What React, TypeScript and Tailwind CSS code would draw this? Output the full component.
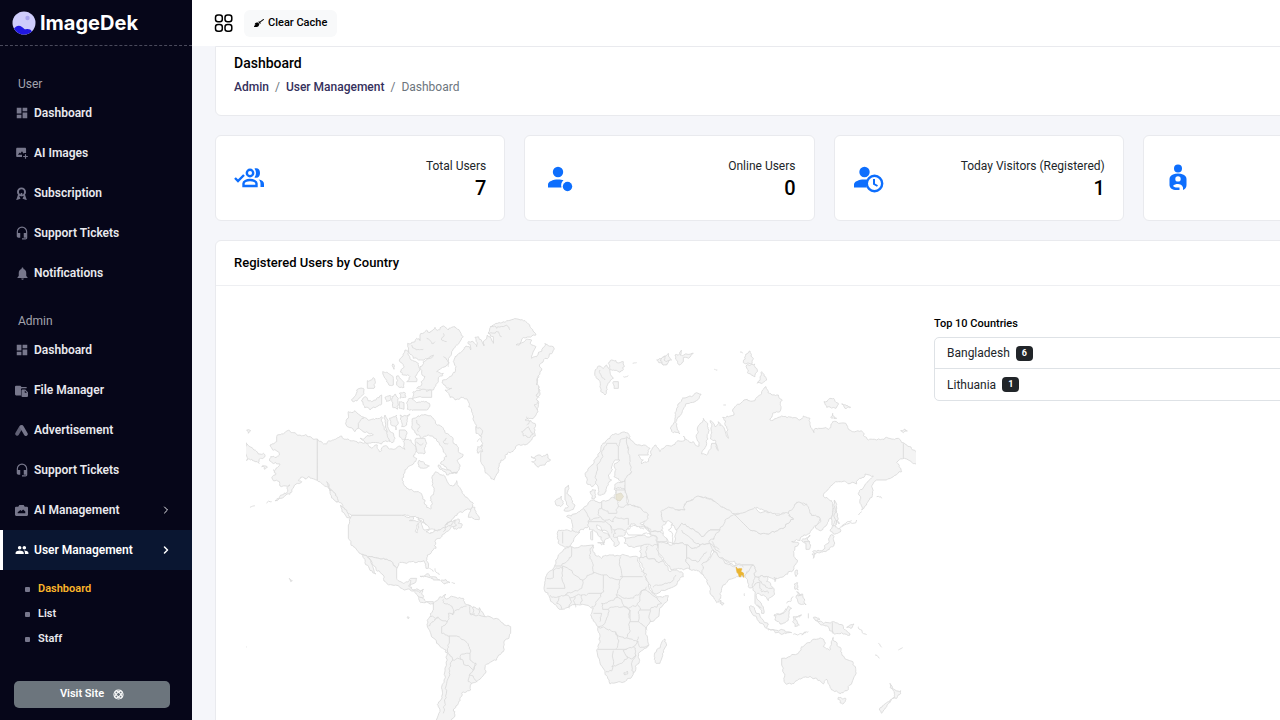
import type { ReactNode } from 'react';
import { FaBroom } from 'react-icons/fa';
import { MdDashboard, MdPeople, MdNotifications, MdHeadsetMic } from 'react-icons/md';
import { BiSolidImageAdd } from 'react-icons/bi';
import { ChevronRight } from 'lucide-react';

type NavItem = { label: string; icon: ReactNode; expandable?: boolean; active?: boolean };

const AwardIcon = () => (
  <svg viewBox="0 0 24 24" className="size-[13px]" fill="none" stroke="currentColor" strokeWidth="3.600">
    <circle cx="12" cy="9" r="6.500" />
    <path d="M7.500 14 5 21.500l4.500-1.500M16.500 14l2.500 7.500-4.500-1.500" />
    <path d="M12 11v6" strokeWidth="3" />
  </svg>
);

const FilesIcon = () => (
  <svg viewBox="0 0 24 24" className="size-[13px]" fill="currentColor">
    <path d="M2 3h8l2 2.500h9.500V8H13a2 2 0 0 0-2 2v11H2a2 2 0 0 1-2-2V5a2 2 0 0 1 2-2Z" />
    <path d="M14 10h5l5 5v7a2 2 0 0 1-2 2h-8a2 2 0 0 1-2-2V12a2 2 0 0 1 2-2Zm4 2v4h4Z" fillRule="evenodd" />
  </svg>
);

const AdsIcon = () => (
  <svg viewBox="0 0 24 24" className="size-[13px]" stroke="currentColor" strokeWidth="7" strokeLinecap="round">
    <path d="M11 6 4 18" opacity=".8" />
    <path d="m12.500 5.500 7.500 13" />
  </svg>
);

const AiIcon = () => (
  <svg viewBox="0 0 24 24" className="size-[13px]" fill="currentColor">
    <path
      fillRule="evenodd"
      d="M8 2h8l2 3h4a2 2 0 0 1 2 2v13a2 2 0 0 1-2 2H2a2 2 0 0 1-2-2V7a2 2 0 0 1 2-2h4ZM5 17h14v-3l-4-4-3 3-2-2-5 4Z"
    />
  </svg>
);

const userNav: NavItem[] = [
  { label: 'Dashboard', icon: <MdDashboard size={14} /> },
  { label: 'AI Images', icon: <BiSolidImageAdd size={14} /> },
  { label: 'Subscription', icon: <AwardIcon /> },
  { label: 'Support Tickets', icon: <MdHeadsetMic size={14} /> },
  { label: 'Notifications', icon: <MdNotifications size={15} /> },
];

const adminNav: NavItem[] = [
  { label: 'Dashboard', icon: <MdDashboard size={14} /> },
  { label: 'File Manager', icon: <FilesIcon /> },
  { label: 'Advertisement', icon: <AdsIcon /> },
  { label: 'Support Tickets', icon: <MdHeadsetMic size={14} /> },
  { label: 'AI Management', icon: <AiIcon />, expandable: true },
  { label: 'User Management', icon: <MdPeople size={14} />, expandable: true, active: true },
];

function NavGroup({ title, items }: { title: string; items: NavItem[] }) {
  return (
    <section>
      <h2 className="h-5 pl-[18px] text-xs leading-[22px] text-[#a3a3ad]">{title}</h2>
      <ul>
        {items.map((item) => (
          <li key={item.label}>
            <a
              href="#"
              className={
                item.active
                  ? 'flex h-10 items-center border-l-[3px] border-white bg-[#0a1631] pr-5 pl-3 text-white'
                  : 'flex h-10 items-center pr-5 pl-[15px] text-[#e9e9ee]'
              }
            >
              <span className={item.active ? 'w-[19px] text-white' : 'w-[19px] text-[#77778c]'}>{item.icon}</span>
              <span className="flex-1 text-xs font-semibold">{item.label}</span>
              {item.expandable && <ChevronRight className="size-3" strokeWidth={item.active ? 3 : 2} />}
            </a>
          </li>
        ))}
      </ul>
    </section>
  );
}

function Sidebar() {
  return (
    <aside className="flex w-48 shrink-0 flex-col bg-[#060619]">
      <div className="flex h-[46px] shrink-0 items-center gap-1 border-b border-dashed border-[#4a4a5c] pl-3">
        <svg viewBox="0 0 24 24" className="size-6">
          <circle cx="12" cy="12" r="11.500" fill="#cfcdfb" />
          <circle cx="15.500" cy="7" r="2.200" fill="#a9a5ee" />
          <path d="M2 17.500c2-2.500 5-4 8-1.500 1.500 1.300 2.500 2.500 4 2.300 2.500-.5 4.500 0 6 2.200a11.500 11.500 0 0 1-18-3Z" fill="#2118e0" />
        </svg>
        <span className="font-[Inter] text-xl font-bold text-white">ImageDek</span>
      </div>
      <nav className="flex flex-1 flex-col gap-[17px] pt-[27px]">
        <NavGroup title="User" items={userNav} />
        <div>
          <NavGroup title="Admin" items={adminNav} />
          <ul className="pt-[7px] pl-[25px] text-[11px] font-semibold text-[#e9e9ee]">
            {['Dashboard', 'List', 'Staff'].map((label, i) => (
              <li key={label} className="flex h-[25px] items-center gap-2">
                <span className="size-[5px] rounded-[1px] bg-[#77778c]" />
                <a href="#" className={i === 0 ? 'text-[#fdb52a]' : ''}>{label}</a>
              </li>
            ))}
          </ul>
        </div>
      </nav>
      <div className="pr-[22px] pb-3 pl-[14px]">
        <button className="flex h-[27px] w-full items-center justify-center gap-[9px] rounded-[5px] bg-[#6c757d] text-[11px] font-semibold text-white">
          Visit Site
          <svg viewBox="0 0 24 24" className="size-[11px]" fill="none" stroke="currentColor" strokeWidth="2.200">
            <circle cx="12" cy="12" r="10" />
            <ellipse cx="12" cy="12" rx="10" ry="4" transform="rotate(45 12 12)" />
            <ellipse cx="12" cy="12" rx="10" ry="4" transform="rotate(-45 12 12)" />
          </svg>
        </button>
      </div>
    </aside>
  );
}

/* stat card icons, 32 unit box */

const GroupCheckIcon = () => (
  <svg viewBox="0 0 32 32" className="size-8" fill="none" stroke="#0d6efd" strokeWidth="2.400">
    <path d="m1 16 3 3 6-6" />
    <circle cx="16" cy="11" r="3.200" />
    <path d="M9.500 24v-2.500c0-2 3-3.500 6.500-3.500s6.500 1.500 6.500 3.500V24Z" />
    <path d="M20.500 6.500c3.500-1 5.500 1 5.500 4.500s-2 5.500-5.500 4.500c2-3 2-6 0-9ZM24.500 17.500c3.500.5 5.500 2 5.500 4.500v3h-3.500v-3c0-2-.5-3.500-2-4.500Z" fill="#0d6efd" stroke="none" />
  </svg>
);

const OnlineIcon = () => (
  <svg viewBox="0 0 32 32" className="size-8" fill="#0d6efd">
    <circle cx="15" cy="10" r="5.200" />
    <path d="M5 25.500v-3c0-3 5-5 10-5 2.500 0 4 .3 5.500.8a7 7 0 0 0-2 7.200Z" />
    <circle cx="24.500" cy="24.500" r="4.700" />
  </svg>
);

const VisitorClockIcon = () => (
  <svg viewBox="0 0 32 32" className="size-8" fill="#0d6efd">
    <circle cx="11.500" cy="10" r="5.200" />
    <path d="M1 25.500v-3c0-3 5-5 10-5 1.500 0 2.700.1 4 .4a9 9 0 0 0-1.500 7.600Z" />
    <circle cx="21.500" cy="21.500" r="7.700" fill="none" stroke="#0d6efd" strokeWidth="2.400" />
    <path d="M21 17v5l3.500 2" fill="none" stroke="#0d6efd" strokeWidth="2" />
  </svg>
);

const VisitorIcon = () => (
  <svg viewBox="0 0 32 32" className="size-8" fill="#0d6efd">
    <circle cx="16" cy="6.500" r="4" />
    <path
      fillRule="evenodd"
      d="M11 12.500c3-1.300 7-1.300 10 0 2 .8 3.500 2.500 3.500 4.500v6c0 2.500-1.500 4.500-3.500 5v-2.500h-3.500V28h-3c-4 0-7-2-7-5v-6c0-2 1.500-3.700 3.500-4.500Zm5 1.700a2.700 2.700 0 1 0 0 5.400 2.700 2.700 0 0 0 0-5.400Zm-5 9.800c2 2 4 1.500 5.500 1.500H21c-1-2.700-3-3.500-5-3.500s-4 .5-5 2Z"
    />
  </svg>
);

const stats = [
  { id: 'total', label: 'Total Users', value: '7', icon: <GroupCheckIcon /> },
  { id: 'online', label: 'Online Users', value: '0', icon: <OnlineIcon /> },
  { id: 'registered', label: 'Today Visitors (Registered)', value: '1', icon: <VisitorClockIcon /> },
  { id: 'guest', icon: <VisitorIcon /> },
];

/* world map: each sheet has its own origin, three units to a pixel */

type Sheet = { x: number; y: number; land?: string[]; borders?: string[]; water?: string[] };

const sheets: Sheet[] = [
  {
    // Alaska, Canada and the arctic islands
    x: 230,
    y: 310,
    land: [
      '140,380 160,372 178,361 195,368 210,375 235,380 262,387 262,511 245,505 235,500 225,507 212,502 205,512 215,515 198,522 185,540 165,557 150,565 135,572 155,555 172,545 180,525 150,528 148,515 130,512 127,500 138,490 130,480 150,462 128,460 118,450 122,440 145,438 148,428 128,420 120,405 140,395',
      '262,387 290,402 310,390 335,378 350,388 370,392 400,400 425,415 442,405 448,425 470,408 490,418 510,408 525,418 520,395 535,388 548,400 558,420 550,440 560,445 545,465 525,485 516,505 530,535 560,545 575,552 585,570 590,592 602,597 607,580 602,560 612,540 608,510 618,485 640,495 655,520 668,528 680,512 690,535 705,560 730,580 722,600 690,605 665,630 650,645 675,630 688,628 685,640 697,645 680,658 665,645 630,660 600,670 585,640 550,620 515,616 365,616 355,610 335,580 318,575 310,545 290,530 262,511',
      '725,595 735,592 740,612 747,630 728,625 715,622',
      '355,305 375,302 402,322 390,345 375,365 350,348',
      '385,340 400,325 420,330 455,320 462,350 480,375 482,390 455,402 410,400 390,385 430,375 400,366 385,355',
      '535,120 533,100 545,97 560,85 570,92 570,75 590,60 600,68 615,52 628,60 640,48 655,60 665,52 680,55 700,80 680,105 665,125 650,165 620,185 640,190 625,215 610,240 590,240 560,235 575,225 585,200 570,170 590,150 610,135 575,150 550,145',
      '508,150 525,120 540,145 565,160 570,180 555,200 560,215 530,215 540,200 525,195 510,185 522,170',
      '550,245 575,238 605,242 605,262 575,262 545,268',
      '530,280 545,265 560,278 590,275 600,285 590,300 550,300 532,298',
      '458,185 475,190 490,205 490,225 475,222 465,205',
      '500,198 520,215 522,232 505,230',
      '412,212 430,203 436,215 432,235 412,235',
      '365,268 380,240 400,235 402,250 385,268 370,275',
      '395,270 405,260 425,275 440,265 455,255 455,282 440,290 420,300 400,285',
      '465,262 480,255 482,270 470,275',
      '485,270 495,252 505,265 502,298 488,292',
      '508,250 525,248 527,262 510,265',
      '508,275 522,278 522,298 508,295',
      '545,350 550,325 580,315 610,325 625,345 640,355 648,370 665,380 670,400 685,412 685,425 700,435 690,445 682,450 690,465 680,490 650,475 632,462 650,440 635,410 615,385 595,375 575,385 560,375',
      '558,385 585,385 590,400 582,432 565,430',
      '478,325 500,315 505,340 498,360 482,340',
      '510,315 540,312 530,345 515,350',
      '508,360 525,360 528,380 518,390 508,380',
      '465,315 475,355 495,385 485,398 470,370',
      '568,450 580,455 598,468 580,475 566,470',
      '625,465 650,480 668,490 682,488 650,495',
      '48,398 72,420 85,432 100,430 105,440 92,445 88,460 65,448 50,452',
      '50,360 62,362 55,370',
      '95,470 112,472 105,478',
      '290,515 310,545 325,575 312,570 300,545',
      '332,585 350,600 362,625 348,618',
      '488,162 494,168 492,178',
    ],
    borders: ['655,170 650,150 640,140', '545,105 560,120 580,118', '590,85 605,100 615,95', '640,70 635,90 650,95', '560,395 570,405 580,400', '560,330 570,350 565,365', '650,385 640,395 655,400'],
  },
  {
    // Greenland, Iceland, Svalbard and Scandinavia
    x: 430,
    y: 310,
    land: [
      '75,140 70,155 78,170 75,187 38,210 42,225 65,235 45,240 60,262 75,270 100,262 115,275 125,300 130,330 138,355 155,380 158,400 152,430 152,455 165,485 180,500 193,510 205,485 213,450 225,445 245,425 260,408 285,405 305,390 316,378 315,340 285,330 315,320 325,290 320,270 330,240 320,210 335,180 328,165 345,145 373,117 345,100 340,112 320,140 305,145 318,110 300,100 305,90 285,92 258,105 275,90 318,75 300,50 285,32 250,28 215,38 185,50 175,70 190,80 190,100 172,75 162,108 145,80 135,82 140,110 115,95 122,120 108,108 95,125',
      '138,350 152,355 155,375 138,370',
      '143,410 157,405 158,425 145,430',
      '275,365 295,350 310,370 300,382 280,378',
      '303,440 320,437 335,440 352,432 362,450 345,465 325,472 305,455 318,450',
      '495,180 505,168 520,175 530,165 540,185 550,205 540,215 530,230 525,255 512,235 510,215 498,200',
      '535,160 545,150 560,158 580,155 583,170 570,187 545,180',
      '550,215 565,215 565,235 552,235',
      '465,490 470,515 485,530 497,520 505,555 525,550 530,530 545,510 535,495 545,470 555,450 570,450 555,475 552,500 580,515 605,485 600,450 590,395 600,380 590,368 570,370 540,385 515,405 505,440 485,465',
      '480,545 497,540 495,550 497,562 485,565',
      '555,530 570,518 588,515 587,550 557,550',
      '680,150 700,140 715,130 725,150 710,165 695,158',
    ],
    borders: [
      '497,520 502,470 515,430 530,400 560,400 565,410', '565,450 565,410 570,390 590,385', '608,160 620,158', '580,200 595,197',
      '328,200 318,225', '330,230 318,255 328,262', '325,275 312,285 322,300', '290,320 300,335 290,345', '180,50 200,55 230,45 240,60', '175,70 205,65 215,80', '150,385 142,395', '510,180 515,200 525,210', '556,535 572,532 586,536',
    ],
  },
  {
    // Russia
    x: 660,
    y: 330,
    land: [
      '-100,320 -90,325 -60,345 -30,355 -35,375 -65,375 -50,390 -55,402 -35,395 -25,375 -15,345 0,365 15,350 45,343 50,335 75,330 70,318 100,335 118,348 110,325 112,300 130,265 143,280 145,310 140,340 125,372 140,375 155,340 165,340 175,362 165,330 150,325 155,290 150,272 165,290 175,275 190,290 205,325 200,290 188,262 222,255 218,240 225,230 262,208 285,212 305,185 318,170 330,190 355,195 367,210 362,240 345,248 330,270 365,258 395,262 420,270 430,258 450,265 455,295 462,308 475,295 505,298 518,275 560,285 580,305 610,308 625,330 665,328 680,322 715,325 735,342 760,360 775,370 768,402 745,390 733,385 710,397 725,425 700,440 680,450 650,450 640,458 638,490 620,520 605,540 600,520 598,485 615,465 640,438 615,432 590,462 560,457 520,462 490,498 515,512 520,540 505,575 480,602 465,592 480,565 450,555 440,525 410,517 400,545 370,548 330,550 290,532 280,548 225,552 195,535 165,515 120,500 80,515 75,540 20,540 3,555 20,575 10,600 -25,605 -55,585 -35,555 -70,530 -95,525 -105,480 -105,450 -85,425 -90,390',
      '30,295 45,270 50,235 65,210 95,200 110,188 123,192 115,208 75,230 62,255 48,275 52,300 60,312 40,308',
      '250,98 258,72 270,63 280,85 275,102',
      '260,105 285,102 292,120 285,140 262,128',
      '292,160 305,125 320,150 310,157',
      '492,215 510,205 535,220 528,235 500,232',
      '545,222 572,232 555,235',
      '512,262 518,250 530,265',
      '722,302 735,297 742,303 730,308',
      '0,92 15,78 12,90 28,92 15,105',
      '45,75 65,60 60,75 100,70 85,85 70,82 70,95 60,105 50,90',
      '523,512 528,530 525,545 538,582 527,570 520,590',
    ],
    borders: ['730,340 730,385', '240,66 248,70', '163,118 172,120', '190,225 198,225', '535,600 575,572', '595,555 605,545', '650,500 665,505'],
  },
  {
    // Europe, the Middle East and Africa
    x: 530,
    y: 480,
    land: [
      '175,68 190,60 215,65 255,55 258,30 285,30 295,75 320,80 355,105 350,120 330,130 345,138 325,142 315,132 300,138 290,155 285,165 262,172 268,190 255,200 245,180 235,160 215,150 200,135 210,150 240,170 225,180 222,195 215,180 190,150 175,140 150,150 140,165 130,185 105,202 85,190 87,150 128,152 125,120 110,110 140,100 160,85',
      '105,30 115,15 110,40 125,55 135,75 130,88 102,92 115,80 105,60',
      '80,58 95,48 100,65 92,80 78,75',
      '182,155 188,152 188,180 182,178',
      '203,188 222,188 215,195',
      '282,172 340,165 378,168 383,195 335,198 300,200 283,190',
      '333,198 383,195 385,215 400,245 385,248 350,230 328,235',
      '345,140 365,155 400,160 410,185 383,185 378,168 360,165',
      '328,235 350,230 385,248 400,245 420,275 440,270 460,290 440,315 375,342 362,315 340,275',
      '393,95 410,85 465,90 470,65 510,50 555,65 585,85 615,103 590,150 540,150 515,170 480,145 455,130 440,150 425,130 400,125',
      '430,192 440,150 455,130 480,145 515,170 540,150 590,150 550,175 555,190 510,195 490,205 470,195',
      '383,185 410,190 430,192 470,195 470,235 480,268 445,265 420,262 400,240 385,215',
      '470,195 490,205 510,195 555,190 560,205 535,235 520,262 525,285 500,270 480,268 470,235',
      '100,210 125,200 190,195 195,225 215,235 245,225 270,228 325,232 330,255 345,290 365,335 380,348 415,347 410,365 360,425 350,440 357,495 325,520 328,545 310,580 285,605 240,612 225,575 200,510 210,470 205,440 185,415 190,385 150,375 95,388 60,355 42,325 50,285 75,255 85,225',
      '405,477 410,495 390,550 378,550 373,530 385,505',
    ],
    water: ['400,135 415,122 427,130 415,150 428,172 428,192 410,190 403,170 395,150', '288,150 300,138 320,140 345,142 362,160 335,165 295,165'],
    borders: [
      '128,152 150,158', '98,155 98,190', '160,85 178,120 175,140', '215,65 215,85 235,100 260,100 265,80 295,75', '178,120 210,110 205,95 215,85', '210,110 250,125 255,110 295,115 295,135', '175,125 215,125 240,135 245,160', '255,150 285,152', '265,80 258,55', '240,135 255,150 250,170 262,172',
      '370,322 395,315 425,305 438,285', '355,198 350,230', '470,235 500,245 530,215', '455,150 490,185 510,195',
      '75,258 95,258 125,225 125,200', '50,295 70,293 70,270 100,265', '98,258 105,325 50,325', '98,258 158,300 190,280 188,250 178,225 188,195', '158,300 155,325 130,335 105,345 85,350 60,345', '188,280 220,285 270,300 272,230', '270,300 268,325 258,345 262,352', '270,290 338,290', '220,285 220,325 212,350 185,380', '155,345 180,340 215,340', '155,345 152,372', '120,355 118,385', '135,350 137,382', '85,350 80,370 95,388', '105,345 120,355 155,345',
      '235,388 218,388 215,370 262,352 295,388 260,380 235,388', '295,388 300,390 298,440 300,455 285,475 250,455 205,442', '235,388 225,430 205,440', '190,400 215,400 210,425', '257,455 262,475 257,508', '257,508 203,508', '257,508 290,508', '250,512 245,573 228,575', '245,560 275,550 292,530 280,510', '283,510 310,500 318,525 300,535 292,530', '310,500 325,485 290,475', '300,425 325,425 352,450', '325,425 330,390 360,390 362,425', '330,390 322,370 340,330 375,350 395,370 360,390', '260,345 300,355 320,345 340,330 350,320', '295,385 322,375', '310,580 305,555 318,525', '325,470 328,500 355,495', '282,578 292,573 293,582 285,585 282,578', '300,415 300,390',
    ],
  },
  {
    // Asia and Oceania
    x: 700,
    y: 480,
    land: [
      '30,180 60,150 75,120 105,105 130,130 150,150 205,162 245,145 280,118 265,100 290,68 320,72 330,100 360,115 340,145 320,165 300,182 290,178 275,185 297,190 280,215 292,240 280,270 255,285 225,298 205,290 185,285 165,290 160,255 125,255 75,240 40,210',
      '105,105 165,82 175,95 240,105 265,100 280,118 245,145 205,162 150,150 130,130',
      '5,255 30,235 40,210 75,240 110,258 125,255 160,255 140,275 130,290 115,290 100,295 65,325 62,355 50,368 35,345 22,300 10,285',
      '160,255 135,285 145,320 158,322 165,345 165,370 185,400 192,400 190,380 170,355 172,340 190,345 205,362 222,345 215,320 200,305 205,290 185,285 165,290',
      '62,360 72,372 66,376 60,370',
      '305,180 330,165 322,180 332,195 328,208 318,208 318,190',
      '338,215 370,210 385,190 392,165 402,170 398,200 375,215 345,222', '390,150 405,135 422,150 400,162', '336,222 345,222 340,235', '285,275 292,270 288,290',
      '222,292 230,295 225,305',
      '148,380 165,390 205,435 200,445 180,430', '203,445 240,450 275,458 240,460 205,450', '222,405 250,400 265,378 275,385 265,420 240,432 225,420',
      '280,410 305,405 285,418 298,435 285,440 278,425', '283,312 293,308 295,330 285,328', '288,352 308,342 318,375 300,372', '290,335 305,345 295,348',
      '345,420 370,430 400,425 430,440 450,465 425,458 400,460 385,440 365,435', '440,442 462,432 452,445', '340,412 360,418 350,422',
      '245,535 295,520 305,500 330,488 345,478 372,480 370,500 392,508 400,472 415,500 425,520 460,550 467,575 445,625 435,632 415,638 395,630 385,612 378,598 370,612 350,595 310,592 285,605 260,613 252,605 255,585 245,555',
      '415,652 437,655 428,672 420,668', '570,610 585,630 602,632 590,655 575,658 583,640', '575,658 560,680 545,700 538,690 560,668',
      '403,60 412,100 408,135 402,110',
    ],
    borders: [
      '397,427 397,460', '65,235 75,250 105,260 108,250', '125,255 130,262', '30,190 60,218', '36,184 58,208', '165,290 158,322', '175,290 185,310 205,325 218,325', '160,320 180,305 185,335 205,340', '172,375 185,385', '222,405 245,402 258,385', '312,185 330,185',
      '425,142 470,120', '475,440 500,465', '535,490 545,502', '525,525 538,535', '595,510 608,503', '260,370 280,350', '280,463 318,458', '305,465 325,455', '325,400 325,415', '133,340 134,348',
    ],
  },
  {
    // USA, Central and South America
    x: 240,
    y: 500,
    land: [
      '335,46 485,46 520,50 555,70 570,100 600,90 635,75 645,60 650,75 620,95 600,115 585,125 588,145 562,165 565,205 558,205 552,182 515,185 480,187 470,205 455,185 430,175 400,172 365,163 340,140 325,115 325,75',
      '365,163 400,172 430,175 455,185 470,205 470,235 490,250 505,245 512,235 530,235 522,250 505,258 520,270 550,268 548,295 560,305 580,305 578,312 550,308 535,290 515,273 480,263 432,243 425,222 400,195 385,172 408,222 398,218 375,178',
      '580,312 600,290 618,283 615,295 640,290 670,295 685,315 720,325 735,350 780,362 812,380 812,400 795,420 790,455 770,480 740,492 738,515 715,540 695,550 692,570 665,580 660,595 655,610 640,630 645,645 630,665 590,665 595,620 605,590 612,540 622,480 618,450 590,430 562,378 570,350 580,330',
      '540,228 560,222 580,230 600,240 580,240 560,230', '602,242 620,243 630,248 615,252',
      '148,235 157,242 152,245', '503,350 508,353 504,356',
    ],
    water: ['508,62 525,48 542,66 525,62', '530,75 535,70 532,98 526,95', '545,68 568,85 552,90', '558,95 585,88 570,100'],
    borders: [
      '610,298 612,310 635,318 638,345 625,340 622,365', '638,345 660,325 680,318', '685,315 690,340 705,342', '700,320 698,340', '718,322 715,342', '690,340 735,350', '570,350 595,352 622,365 605,380 605,400 628,408', '565,378 580,365 595,352', '628,408 650,408 685,432 690,460 665,462 662,478 638,480 622,450 628,430 628,408', '690,460 690,480 708,490 700,510 662,478', '638,480 628,510 620,550 615,610 610,640', '708,490 688,525 712,545', '688,525 685,545 695,550', '512,240 515,265', '520,270 540,278 550,268', '535,290 548,293', '45,18 30,22', '80,10 95,5', '568,205 580,215', '585,205 598,225', '15,440 20,441', '635,248 645,250', '610,95 615,75 625,65',
    ],
  },
];

/** Stable pseudo random offset, so that two lands that share an edge bend it alike. */
const noise = (x: number, y: number) => {
  const n = Math.sin(x * 12.9898 + y * 78.233) * 43758.5453;
  return n - Math.floor(n) - 0.5;
};

/** Breaks the edges of a simplified outline up; horizontal and vertical ones stay straight. */
function outline(points: string, closed: boolean) {
  let pts = points.split(' ').map((p) => p.split(',').map(Number));
  if (closed) pts.push(pts[0]);
  for (let level = 0; level < 3; level++) {
    const next = [pts[0]];
    for (let i = 1; i < pts.length; i++) {
      const [ax, ay] = pts[i - 1];
      const [bx, by] = pts[i];
      const length = Math.hypot(bx - ax, by - ay);
      if (ax !== bx && ay !== by && length > 6) {
        const mx = (ax + bx) / 2;
        const my = (ay + by) / 2;
        const bend = Math.min(length * 0.5, 9);
        next.push([mx + noise(mx, my) * bend, my + noise(my, mx) * bend]);
      }
      next.push([bx, by]);
    }
    pts = next;
  }
  return 'M' + pts.map(([x, y]) => `${x.toFixed(1)} ${y.toFixed(1)}`).join('L') + (closed ? 'Z' : '');
}

function WorldMap() {
  return (
    <svg viewBox="246 315 670 420" className="w-[670px] shrink-0" role="img" aria-label="Registered users by country">
      <g stroke="#dadada" strokeWidth="2.600" strokeLinejoin="round">
        {sheets.map((sheet) => (
          <g key={`${sheet.x}-${sheet.y}`} transform={`translate(${sheet.x} ${sheet.y}) scale(0.33333)`}>
            {sheet.land?.map((p) => <path key={p} d={outline(p, true)} fill="#f4f4f4" />)}
            {sheet.water?.map((p) => <path key={p} d={outline(p, true)} fill="#ffffff" />)}
            {sheet.borders?.map((p) => <path key={p} d={outline(p, false)} fill="none" />)}
          </g>
        ))}
      </g>
      {/* Lithuania, Bangladesh */}
      <path d="m616 494.500 5-1.500 2.500 3.500-3.500 4.500-4-1.500Z" fill="#e8e4d4" stroke="#dcd8c8" strokeWidth=".8" />
      <path d="m736 567 1.800 2 1.700-.5 2.500.3-1.200 2.700 2.700 1.500.3 4.500-1.500-2.500-1.300.3-.5 1.700-1.500-.5-.5-2.500-1.500-1.500-.5-2.500Z" fill="#eab530" stroke="#e6b23a" strokeWidth=".6" />
    </svg>
  );
}

const card = 'rounded-md border border-[#e9eaee] bg-white';

export default function App() {
  return (
    <div className="flex h-screen overflow-hidden bg-[#f5f6fa] font-[Roboto,sans-serif] text-[#212529]">
      <Sidebar />
      <div className="flex min-w-0 flex-1 flex-col">
        <header className="flex h-[46px] shrink-0 items-center gap-[10px] bg-white pl-[22px] text-black">
          <button aria-label="Apps">
            <svg viewBox="0 0 20 20" className="size-5" fill="none" stroke="currentColor" strokeWidth="1.500">
              <rect x="1.500" y="2" width="6.800" height="6.800" rx="2.500" />
              <rect x="11" y="2" width="6.800" height="6.800" rx="2.500" />
              <rect x="1.500" y="11.500" width="6.800" height="6.800" rx="2.500" />
              <rect x="11" y="11.500" width="6.800" height="6.800" rx="2.500" />
            </svg>
          </button>
          <button className="flex h-[27px] items-center gap-1 rounded-md bg-[#f8f9fa] px-[10px] text-[11px] font-medium">
            <FaBroom size={10} />
            Clear Cache
          </button>
        </header>

        <main className="flex-1 overflow-hidden pl-[23px]">
          <div className="flex min-w-[1218px] flex-col gap-[19px]">
            <section className="h-[70px] rounded-b-md border border-[#e9eaee] bg-white px-[18px] pt-[6px]">
              <h1 className="text-sm leading-5 font-medium text-black">Dashboard</h1>
              <nav aria-label="Breadcrumb" className="mt-1 flex gap-[6px] text-xs leading-5">
                <a href="#" className="font-medium text-[#35305c]">Admin</a>
                <span className="text-[#6c757d]">/</span>
                <a href="#" className="font-medium text-[#35305c]">User Management</a>
                <span className="text-[#6c757d]">/</span>
                <span className="text-[#6c757d]">Dashboard</span>
              </nav>
            </section>

            <section className="flex gap-[19px]">
              {stats.map((stat) => (
                <div key={stat.id} className={`${card} flex h-[86px] min-w-[290px] flex-1 items-center justify-between px-[18px]`}>
                  {stat.icon}
                  {stat.label && (
                    <div className="text-right">
                      <p className="text-xs leading-5">{stat.label}</p>
                      <p className="text-xl leading-6 font-medium text-black">{stat.value}</p>
                    </div>
                  )}
                </div>
              ))}
            </section>

            <section className={card}>
              <h2 className="h-[45px] border-b border-[#eeeff2] px-[18px] text-[13px] leading-[44px] font-medium text-black">
                Registered Users by Country
              </h2>
              <div className="flex gap-[18px] pt-[29px] pl-[30px]">
                <WorldMap />
                <div className="flex-1 pr-[18px]">
                  <h3 className="text-[11px] leading-[18px] font-medium text-black">Top 10 Countries</h3>
                  <ul className="mt-1 divide-y divide-[#dee2e6] rounded-[5px] border border-[#dee2e6] text-xs">
                    {[['Bangladesh', 6], ['Lithuania', 1]].map(([name, count]) => (
                      <li key={name} className="flex h-[31px] items-center gap-[6px] px-3">
                        {name}
                        <span className="rounded bg-[#212529] px-[6px] text-[9px] leading-[15px] font-bold text-white">{count}</span>
                      </li>
                    ))}
                  </ul>
                </div>
              </div>
            </section>
          </div>
        </main>
      </div>
    </div>
  );
}
